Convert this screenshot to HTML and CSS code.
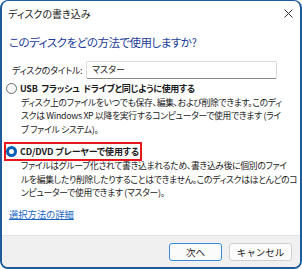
FILE: index.html
```html
<!DOCTYPE html>
<html lang="ja">
<head>
<meta charset="utf-8">
<link rel="stylesheet" href="styles.css">
</head>
<body>
<div class="window">
  <div class="titlebar">
    <span class="title">ディスクの書き込み</span>
    <svg class="close" width="9" height="9" viewBox="0 0 9 9"><path d="M0.5 0.5L8.5 8.5M8.5 0.5L0.5 8.5" stroke="#333" stroke-width="1" fill="none"/></svg>
  </div>
  <div class="content">
    <h1 class="heading">このディスクをどの方法で使用しますか?</h1>
    <div class="field">
      <span class="field-label">ディスクのタイトル:</span>
      <div class="input">マスター</div>
    </div>
    <div class="option first">
      <div class="opt-row"><span class="radio"></span><span class="opt-text usb">USB フラッシュ ドライブと同じように使用する</span></div>
      <p class="desc">ディスク上のファイルをいつでも保存、編集、および削除できます。このディ<br>スクは Windows XP 以降を実行するコンピューターで使用できます (ライ<br>ブ ファイル システム)。</p>
    </div>
    <div class="option second">
      <div class="opt-row marked"><span class="radio checked"></span><span class="opt-text cd">CD/DVD プレーヤーで使用する</span></div>
      <p class="desc">ファイルはグループ化されて書き込まれるため、書き込み後に個別のファイ<br>ルを編集したり削除したりすることはできません。このディスクはほとんどのコ<br>ンピューターで使用できます (マスター)。</p>
    </div>
    <a class="link" href="#">選択方法の詳細</a>
  </div>
  <div class="footer">
    <button class="btn default">次へ</button>
    <button class="btn cancel">キャンセル</button>
  </div>
</div>
</body>
</html>
```
FILE: styles.css
```css
* { box-sizing: border-box; }
html, body { margin: 0; padding: 0; background: #fff; }
body {
  font-family: "Noto Sans CJK JP", "Noto Sans", sans-serif;
  font-feature-settings: "palt";
  color: #1a1a1a;
}
.window {
  width: 302px;
  height: 269px;
  border: 2px solid #1f5a9c;
  border-top-width: 1px;
  border-radius: 8px;
  display: flex;
  flex-direction: column;
  overflow: hidden;
  background: #fff;
}
.titlebar {
  flex: none;
  height: 25px;
  display: flex;
  align-items: center;
  justify-content: space-between;
  padding: 0 7px 0 6px;
}
.title { font-size: 10px; color: #1a1a1a; }
.close { display: block; }
.content {
  flex: 1;
  min-height: 0;
  display: flex;
  flex-direction: column;
  padding: 6px 0 0 7px;
}
.heading {
  margin: 0;
  font-size: 11.5px;
  letter-spacing: -0.5px;
  font-weight: 400;
  color: #1d3c9a;
  line-height: 20px;
}
.field {
  display: flex;
  align-items: center;
  margin-top: 9px;
  padding-left: 3px;
}
.field-label {
  flex: none;
  width: 74px;
  font-size: 9px;
  letter-spacing: -0.3px;
  white-space: nowrap;
}
.input {
  width: 191px;
  height: 18px;
  border: 1px solid #dadada;
  border-bottom-color: #8a8a8a;
  border-radius: 2px;
  font-size: 9px;
  line-height: 16px;
  padding-left: 5px;
}
.option { display: flex; flex-direction: column; align-items: flex-start; }
.option.first { margin-top: 2px; }
.option.second { margin-top: 8px; }
.opt-row {
  display: flex;
  align-items: center;
  gap: 3px;
  height: 15px;
  margin-left: -3px;
  padding-right: 1px;
  font-size: 9px;
  font-weight: 700;
  white-space: nowrap;
}
.usb { letter-spacing: -0.3px; word-spacing: 2px; }
.cd { letter-spacing: -0.1px; }
.marked {
  outline: 2px solid #e5161c;
}
.radio {
  width: 11px;
  height: 11px;
  border-radius: 50%;
  border: 1px solid #6b6b6b;
  background: #f7f7f7;
  flex: none;
}
.radio.checked {
  border: 3px solid #0a5fb4;
  background: #fff;
}
.desc {
  margin: 0;
  padding-left: 12px;
  font-size: 8.8px;
  letter-spacing: -0.3px;
  line-height: 13.4px;
  white-space: nowrap;
}
.link {
  margin-top: 8px;
  font-size: 9.3px;
  line-height: 15px;
  color: #1a66c4;
  text-decoration: underline;
  align-self: flex-start;
}
.footer {
  flex: none;
  height: 32px;
  background: #f0f0f0;
  border-top: 1px solid #e3e3e3;
  display: flex;
  justify-content: flex-end;
  align-items: flex-start;
  gap: 7px;
  padding: 7px 8px 0 0;
}
.btn {
  font-family: inherit;
  font-size: 9.5px;
  height: 18px;
  padding: 0;
  border: 1px solid #d0d0d0;
  border-radius: 3px;
  background: #fbfbfb;
  color: #1a1a1a;
}
.btn.default { width: 53px; border-color: #3a8ad8; }
.btn.cancel { width: 63px; }
```
